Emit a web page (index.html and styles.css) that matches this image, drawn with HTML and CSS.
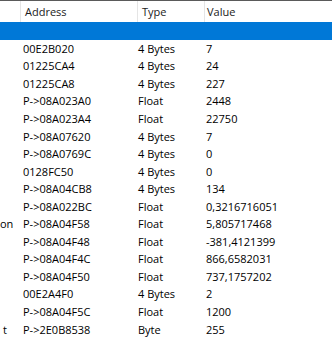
FILE: index.html
```html
<!DOCTYPE html>
<html lang="en">
<head>
  <meta charset="UTF-8">
  <title>Address List</title>
  <link rel="stylesheet" href="styles.css">
</head>
<body>

<div class="list">
  <div class="head">
    <div class="col desc"></div>
    <div class="col addr">Address</div>
    <div class="col type">Type</div>
    <div class="col value">Value</div>
  </div>

  <div class="row selected">
    <div class="desc"></div><div class="addr"></div><div class="type"></div><div class="value"></div>
  </div>
  <div class="row"><div class="desc"></div><div class="addr">00E2B020</div><div class="type">4 Bytes</div><div class="value">7</div></div>
  <div class="row"><div class="desc"></div><div class="addr">01225CA4</div><div class="type">4 Bytes</div><div class="value">24</div></div>
  <div class="row"><div class="desc"></div><div class="addr">01225CA8</div><div class="type">4 Bytes</div><div class="value">227</div></div>
  <div class="row"><div class="desc"></div><div class="addr">P-&gt;08A023A0</div><div class="type">Float</div><div class="value">2448</div></div>
  <div class="row"><div class="desc"></div><div class="addr">P-&gt;08A023A4</div><div class="type">Float</div><div class="value">22750</div></div>
  <div class="row"><div class="desc"></div><div class="addr">P-&gt;08A07620</div><div class="type">4 Bytes</div><div class="value">7</div></div>
  <div class="row"><div class="desc"></div><div class="addr">P-&gt;08A0769C</div><div class="type">4 Bytes</div><div class="value">0</div></div>
  <div class="row"><div class="desc"></div><div class="addr">0128FC50</div><div class="type">4 Bytes</div><div class="value">0</div></div>
  <div class="row"><div class="desc"></div><div class="addr">P-&gt;08A04CB8</div><div class="type">4 Bytes</div><div class="value">134</div></div>
  <div class="row"><div class="desc"></div><div class="addr">P-&gt;08A022BC</div><div class="type">Float</div><div class="value">0,3216716051</div></div>
  <div class="row"><div class="desc cut-on">on</div><div class="addr">P-&gt;08A04F58</div><div class="type">Float</div><div class="value">5,805717468</div></div>
  <div class="row"><div class="desc"></div><div class="addr">P-&gt;08A04F48</div><div class="type">Float</div><div class="value">-381,4121399</div></div>
  <div class="row"><div class="desc"></div><div class="addr">P-&gt;08A04F4C</div><div class="type">Float</div><div class="value">866,6582031</div></div>
  <div class="row"><div class="desc"></div><div class="addr">P-&gt;08A04F50</div><div class="type">Float</div><div class="value">737,1757202</div></div>
  <div class="row"><div class="desc"></div><div class="addr">00E2A4F0</div><div class="type">4 Bytes</div><div class="value">2</div></div>
  <div class="row"><div class="desc"></div><div class="addr">P-&gt;08A04F5C</div><div class="type">Float</div><div class="value">1200</div></div>
  <div class="row"><div class="desc cut-t">t</div><div class="addr">P-&gt;2E0B8538</div><div class="type">Byte</div><div class="value">255</div></div>
</div>

</body>
</html>
```

FILE: styles.css
```css
body {
  margin: 0;
  background: #ffffff;
  font-family: "Open Sans", "Noto Sans", sans-serif;
  font-size: 11px;
  color: #000000;
}

.list {
  width: 332px;
  height: 347px;
  overflow: hidden;
  border-top: 1px solid #5a5a5a;
}

.head,
.row {
  display: grid;
  grid-template-columns: 21px 117px 67px 1fr;
}

.head {
  height: 21px;
  align-items: center;
  color: #1a1a1a;
}

.head .col {
  height: 100%;
  display: flex;
  align-items: center;
  padding-left: 4px;
  border-right: 1px solid #e5e5e5;
}

.head .desc {
  padding-left: 0;
}

.head .value {
  border-right: none;
  padding-left: 2px;
}

.row {
  height: 17.56px;
  align-items: center;
  white-space: nowrap;
}

.row.selected {
  background-color: #0078d7;
}

.row .addr {
  padding-left: 2px;
}

.row .value {
  padding-left: 1px;
}

.row .desc {
  text-align: right;
}

.cut-on {
  padding-right: 8px;
}

.cut-t {
  padding-right: 14px;
}
```
